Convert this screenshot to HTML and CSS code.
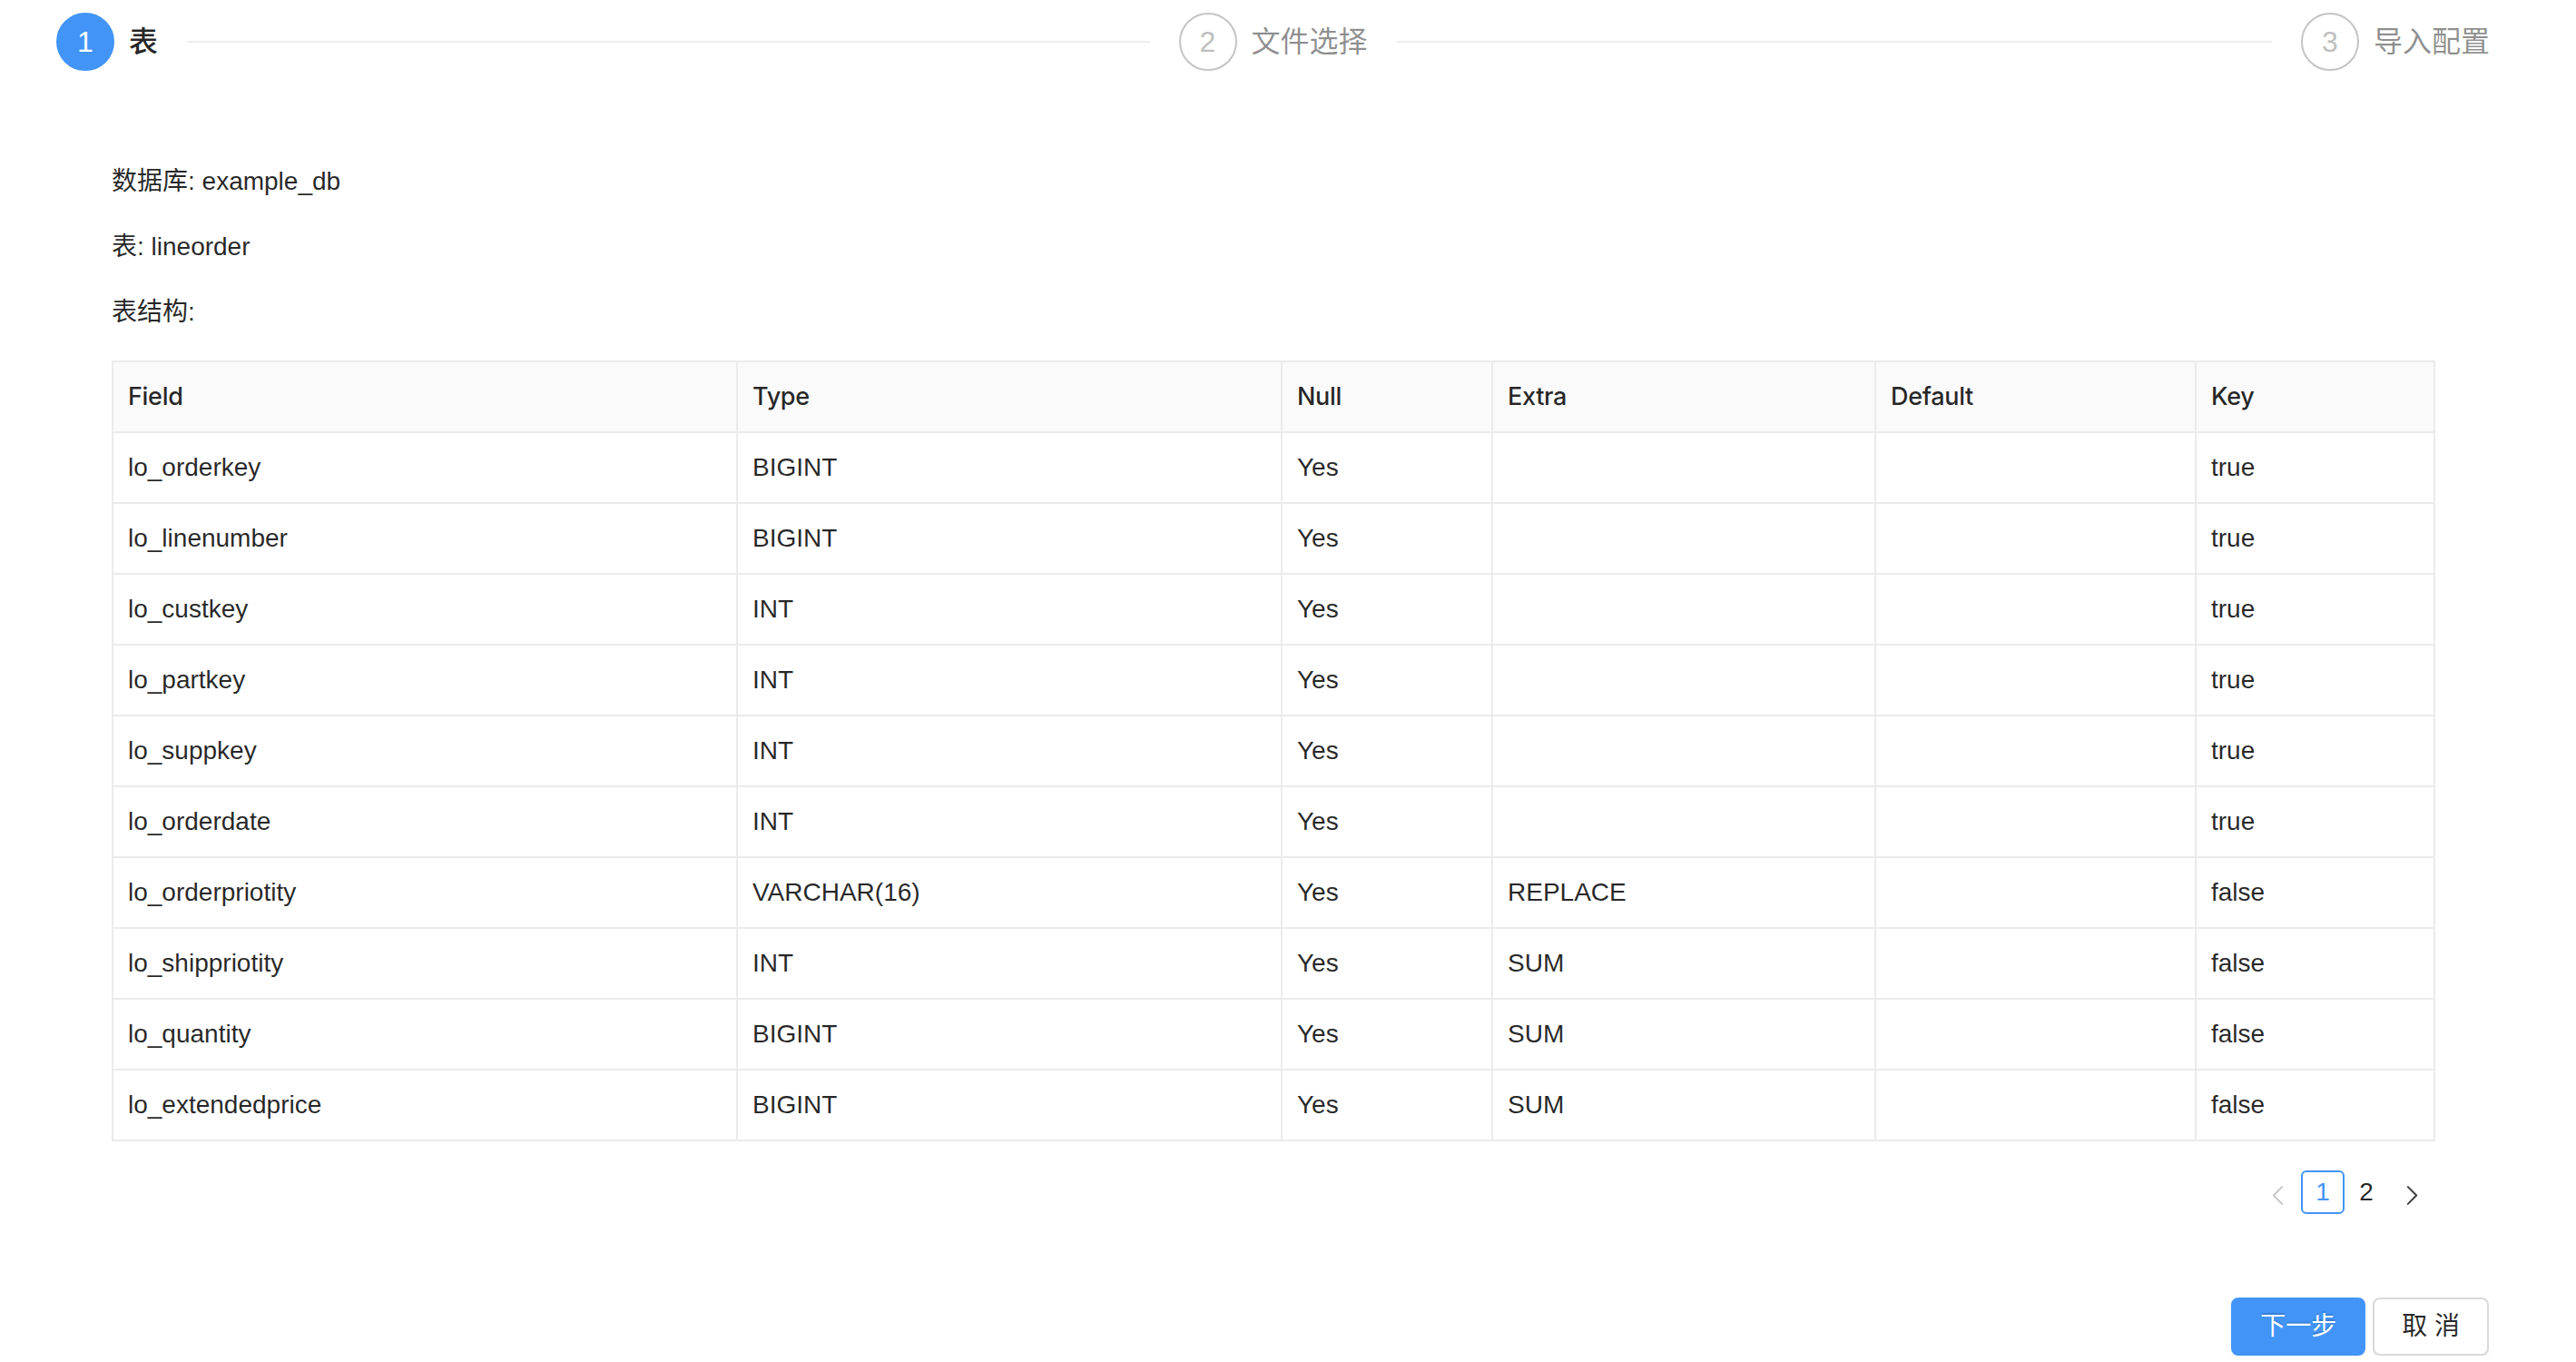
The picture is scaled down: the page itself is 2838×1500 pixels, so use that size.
FILE: index.html
```html
<!DOCTYPE html>
<html lang="zh-CN">
<head>
<meta charset="utf-8">
<title>导入</title>
<link rel="stylesheet" href="styles.css">
</head>
<body>
<div class="steps">
  <div class="step step-active">
    <div class="step-icon">1</div>
    <div class="step-title">表</div>
    <div class="step-line"></div>
  </div>
  <div class="step">
    <div class="step-icon">2</div>
    <div class="step-title">文件选择</div>
    <div class="step-line"></div>
  </div>
  <div class="step">
    <div class="step-icon">3</div>
    <div class="step-title">导入配置</div>
  </div>
</div>

<section class="content">
  <p class="info">数据库: example_db</p>
  <p class="info">表: lineorder</p>
  <p class="info info-last">表结构:</p>

  <table class="schema">
    <colgroup>
      <col class="c-field"><col class="c-type"><col class="c-null"><col class="c-extra"><col class="c-default"><col class="c-key">
    </colgroup>
    <thead>
      <tr><th>Field</th><th>Type</th><th>Null</th><th>Extra</th><th>Default</th><th>Key</th></tr>
    </thead>
    <tbody>
      <tr><td>lo_orderkey</td><td>BIGINT</td><td>Yes</td><td></td><td></td><td>true</td></tr>
      <tr><td>lo_linenumber</td><td>BIGINT</td><td>Yes</td><td></td><td></td><td>true</td></tr>
      <tr><td>lo_custkey</td><td>INT</td><td>Yes</td><td></td><td></td><td>true</td></tr>
      <tr><td>lo_partkey</td><td>INT</td><td>Yes</td><td></td><td></td><td>true</td></tr>
      <tr><td>lo_suppkey</td><td>INT</td><td>Yes</td><td></td><td></td><td>true</td></tr>
      <tr><td>lo_orderdate</td><td>INT</td><td>Yes</td><td></td><td></td><td>true</td></tr>
      <tr><td>lo_orderpriotity</td><td>VARCHAR(16)</td><td>Yes</td><td>REPLACE</td><td></td><td>false</td></tr>
      <tr><td>lo_shippriotity</td><td>INT</td><td>Yes</td><td>SUM</td><td></td><td>false</td></tr>
      <tr><td>lo_quantity</td><td>BIGINT</td><td>Yes</td><td>SUM</td><td></td><td>false</td></tr>
      <tr><td>lo_extendedprice</td><td>BIGINT</td><td>Yes</td><td>SUM</td><td></td><td>false</td></tr>
    </tbody>
  </table>

  <div class="pagination">
    <span class="pg-arrow pg-disabled">
      <svg viewBox="0 0 16 24" width="16" height="24"><polyline points="13,2 3,12 13,22" fill="none" stroke="currentColor" stroke-width="2.2" stroke-linecap="round" stroke-linejoin="round"/></svg>
    </span>
    <span class="pg-item pg-current">1</span>
    <span class="pg-item">2</span>
    <span class="pg-arrow">
      <svg viewBox="0 0 16 24" width="16" height="24"><polyline points="3,2 13,12 3,22" fill="none" stroke="currentColor" stroke-width="2.2" stroke-linecap="round" stroke-linejoin="round"/></svg>
    </span>
  </div>
</section>

<div class="footer">
  <button class="btn btn-primary">下一步</button>
  <button class="btn btn-default">取 消</button>
</div>
</body>
</html>
```

FILE: styles.css
```css
html, body {
  margin: 0;
  padding: 0;
  background: #ffffff;
  font-family: "Liberation Sans", "Noto Sans CJK SC", sans-serif;
  color: rgba(0, 0, 0, 0.85);
}

/* Steps */
.steps {
  display: flex;
  padding: 14px 63px 0 62px;
}
.step {
  display: flex;
  align-items: center;
  flex: 1 1 0;
  min-width: 0;
  overflow: hidden;
  padding-left: 32px;
}
.step:first-child {
  padding-left: 0;
}
.step:last-child {
  flex: none;
}
.step-icon {
  flex: none;
  width: 64px;
  height: 64px;
  box-sizing: border-box;
  border-radius: 50%;
  border: 2px solid #c4c4c4;
  display: flex;
  align-items: center;
  justify-content: center;
  font-size: 32px;
  color: #bfbfbf;
  margin-right: 16px;
}
.step-active .step-icon {
  background: #4294f7;
  border-color: #4294f7;
  color: #ffffff;
}
.step-title {
  flex: none;
  font-size: 32px;
  line-height: 64px;
  color: rgba(0, 0, 0, 0.45);
  padding-right: 32px;
  white-space: nowrap;
}
.step-active .step-title {
  color: rgba(0, 0, 0, 0.85);
  font-weight: 500;
}
.step-line {
  flex: 1;
  min-width: 0;
  height: 2px;
  background: #ececec;
}

/* Content */
.content {
  margin-top: 100px;
  padding: 0 157px 0 123px;
}
.info {
  margin: 0 0 28px 0;
  font-size: 28px;
  line-height: 44px;
  color: rgba(0, 0, 0, 0.85);
}
.info-last {
  margin-bottom: 31px;
}

/* Table */
.schema {
  width: 100%;
  table-layout: fixed;
  border-collapse: collapse;
  font-size: 28px;
  color: rgba(0, 0, 0, 0.85);
}
.c-field { width: 688px; }
.c-type { width: 600px; }
.c-null { width: 232px; }
.c-extra { width: 422px; }
.c-default { width: 353px; }
.c-key { width: 263px; }

.schema th,
.schema td {
  border: 2px solid #ebebeb;
  padding: 17px 16px;
  line-height: 42px;
  text-align: left;
  white-space: nowrap;
}
.schema th {
  background: #fafafa;
  font-family: "Inter", "Liberation Sans", sans-serif;
  font-size: 27px;
  font-weight: 500;
  letter-spacing: -0.3px;
}

/* Pagination */
.pagination {
  display: flex;
  justify-content: flex-end;
  align-items: center;
  margin-top: 32px;
}
.pg-arrow {
  width: 48px;
  height: 48px;
  display: flex;
  align-items: center;
  justify-content: center;
  color: #404040;
  padding-top: 6px;
  box-sizing: border-box;
}
.pg-arrow svg {
  width: 15px;
  height: 23px;
}
.pg-disabled {
  color: #c8c8c8;
  margin-right: 2px;
}
.pg-item {
  width: 48px;
  height: 48px;
  box-sizing: border-box;
  border: 2px solid transparent;
  border-radius: 6px;
  display: flex;
  align-items: center;
  justify-content: center;
  font-size: 28px;
  color: rgba(0, 0, 0, 0.85);
}
.pg-item + .pg-arrow {
  margin-left: 2px;
}
.pg-current {
  border-color: #4294f7;
  color: #4294f7;
}

/* Footer */
.footer {
  display: flex;
  justify-content: flex-end;
  gap: 8px;
  margin-top: 92px;
  padding-right: 96px;
}
.btn {
  height: 64px;
  box-sizing: border-box;
  padding: 0 30px;
  border-radius: 8px;
  font-family: "Liberation Sans", "Noto Sans CJK SC", sans-serif;
  font-size: 28px;
  line-height: 60px;
  cursor: pointer;
  box-shadow: 0 4px 0 rgba(0, 0, 0, 0.03);
}
.btn-primary {
  background: #4294f7;
  border: 2px solid #4294f7;
  color: #ffffff;
  text-shadow: 0 -2px 0 rgba(0, 0, 0, 0.12);
}
.btn-default {
  background: #ffffff;
  border: 2px solid #d9d9d9;
  color: rgba(0, 0, 0, 0.85);
}
```
